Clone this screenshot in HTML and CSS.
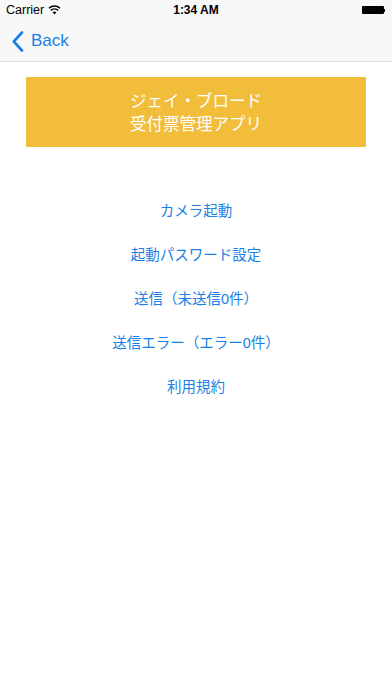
FILE: index.html
```html
<!DOCTYPE html>
<html>
<head>
<meta charset="utf-8">
<link rel="stylesheet" href="styles.css">
</head>
<body>
<div class="top">
  <div class="status">
    <div class="carrier">Carrier
      <svg class="wifi" width="13" height="10" viewBox="0 0 13 10"><path d="M6.5 9.5 L4.6 7.3 A3 3 0 0 1 8.4 7.3 Z" fill="#000"/><path d="M2.9 5.4 A5.3 5.3 0 0 1 10.1 5.4" stroke="#000" stroke-width="1.5" fill="none"/><path d="M1 3.3 A8 8 0 0 1 12 3.3" stroke="#000" stroke-width="1.5" fill="none"/></svg>
    </div>
    <div class="time">1:34 AM</div>
    <div class="battery"><span class="cell"></span><span class="tip"></span></div>
  </div>
  <div class="nav">
    <svg class="chev" width="12" height="21" viewBox="0 0 12 21"><path d="M10 1.5 L1.8 10.5 L10 19.5" stroke="#1a7fe6" stroke-width="2.6" fill="none" stroke-linecap="round" stroke-linejoin="round"/></svg>
    <span class="back">Back</span>
  </div>
</div>
<div class="content">
  <div class="banner">
    <div>ジェイ・ブロード</div>
    <div>受付票管理アプリ</div>
  </div>
  <ul class="menu">
    <li>カメラ起動</li>
    <li>起動パスワード設定</li>
    <li>送信（未送信0件）</li>
    <li>送信エラー（エラー0件）</li>
    <li>利用規約</li>
  </ul>
</div>
</body>
</html>
```
FILE: styles.css
```css
html, body { margin: 0; padding: 0; }
body {
  width: 392px; height: 696px; background: #fff;
  font-family: "Liberation Sans", "Noto Sans CJK JP", sans-serif;
  overflow: hidden;
}
.top { background: #f8f8f8; border-bottom: 1px solid #dcdcdc; }
.status {
  height: 20px; display: grid; grid-template-columns: 1fr auto 1fr;
  align-items: center; padding: 0 6px; font-size: 12.5px; color: #000;
}
.carrier { display: flex; align-items: center; gap: 4px; }
.wifi { margin-top: -1px; }
.time { font-weight: bold; font-size: 12px; }
.battery { justify-self: end; display: flex; align-items: center; margin-right: 1px; }
.cell { width: 22px; height: 8px; background: #000; border-radius: 1px; }
.tip { width: 1.5px; height: 3px; background: #000; }
.nav { height: 41px; display: flex; align-items: center; padding-left: 12px; }
.chev { margin-top: 1px; }
.back { color: #1a7fe6; font-size: 17px; margin-left: 7px; margin-top: 1px; }
.content { padding: 15px 26px 0; }
.banner {
  background: #f1bd3b; height: 70px; color: #fff; font-size: 16.5px;
  display: flex; flex-direction: column; justify-content: center; align-items: center;
  line-height: 23px; padding-top: 1px; box-sizing: border-box;
}
.menu {
  list-style: none; margin: 54px 0 0; padding: 0;
  display: flex; flex-direction: column; align-items: center; gap: 24px;
}
.menu li { color: #1a7fe6; font-size: 14.5px; line-height: 20px; }
```
